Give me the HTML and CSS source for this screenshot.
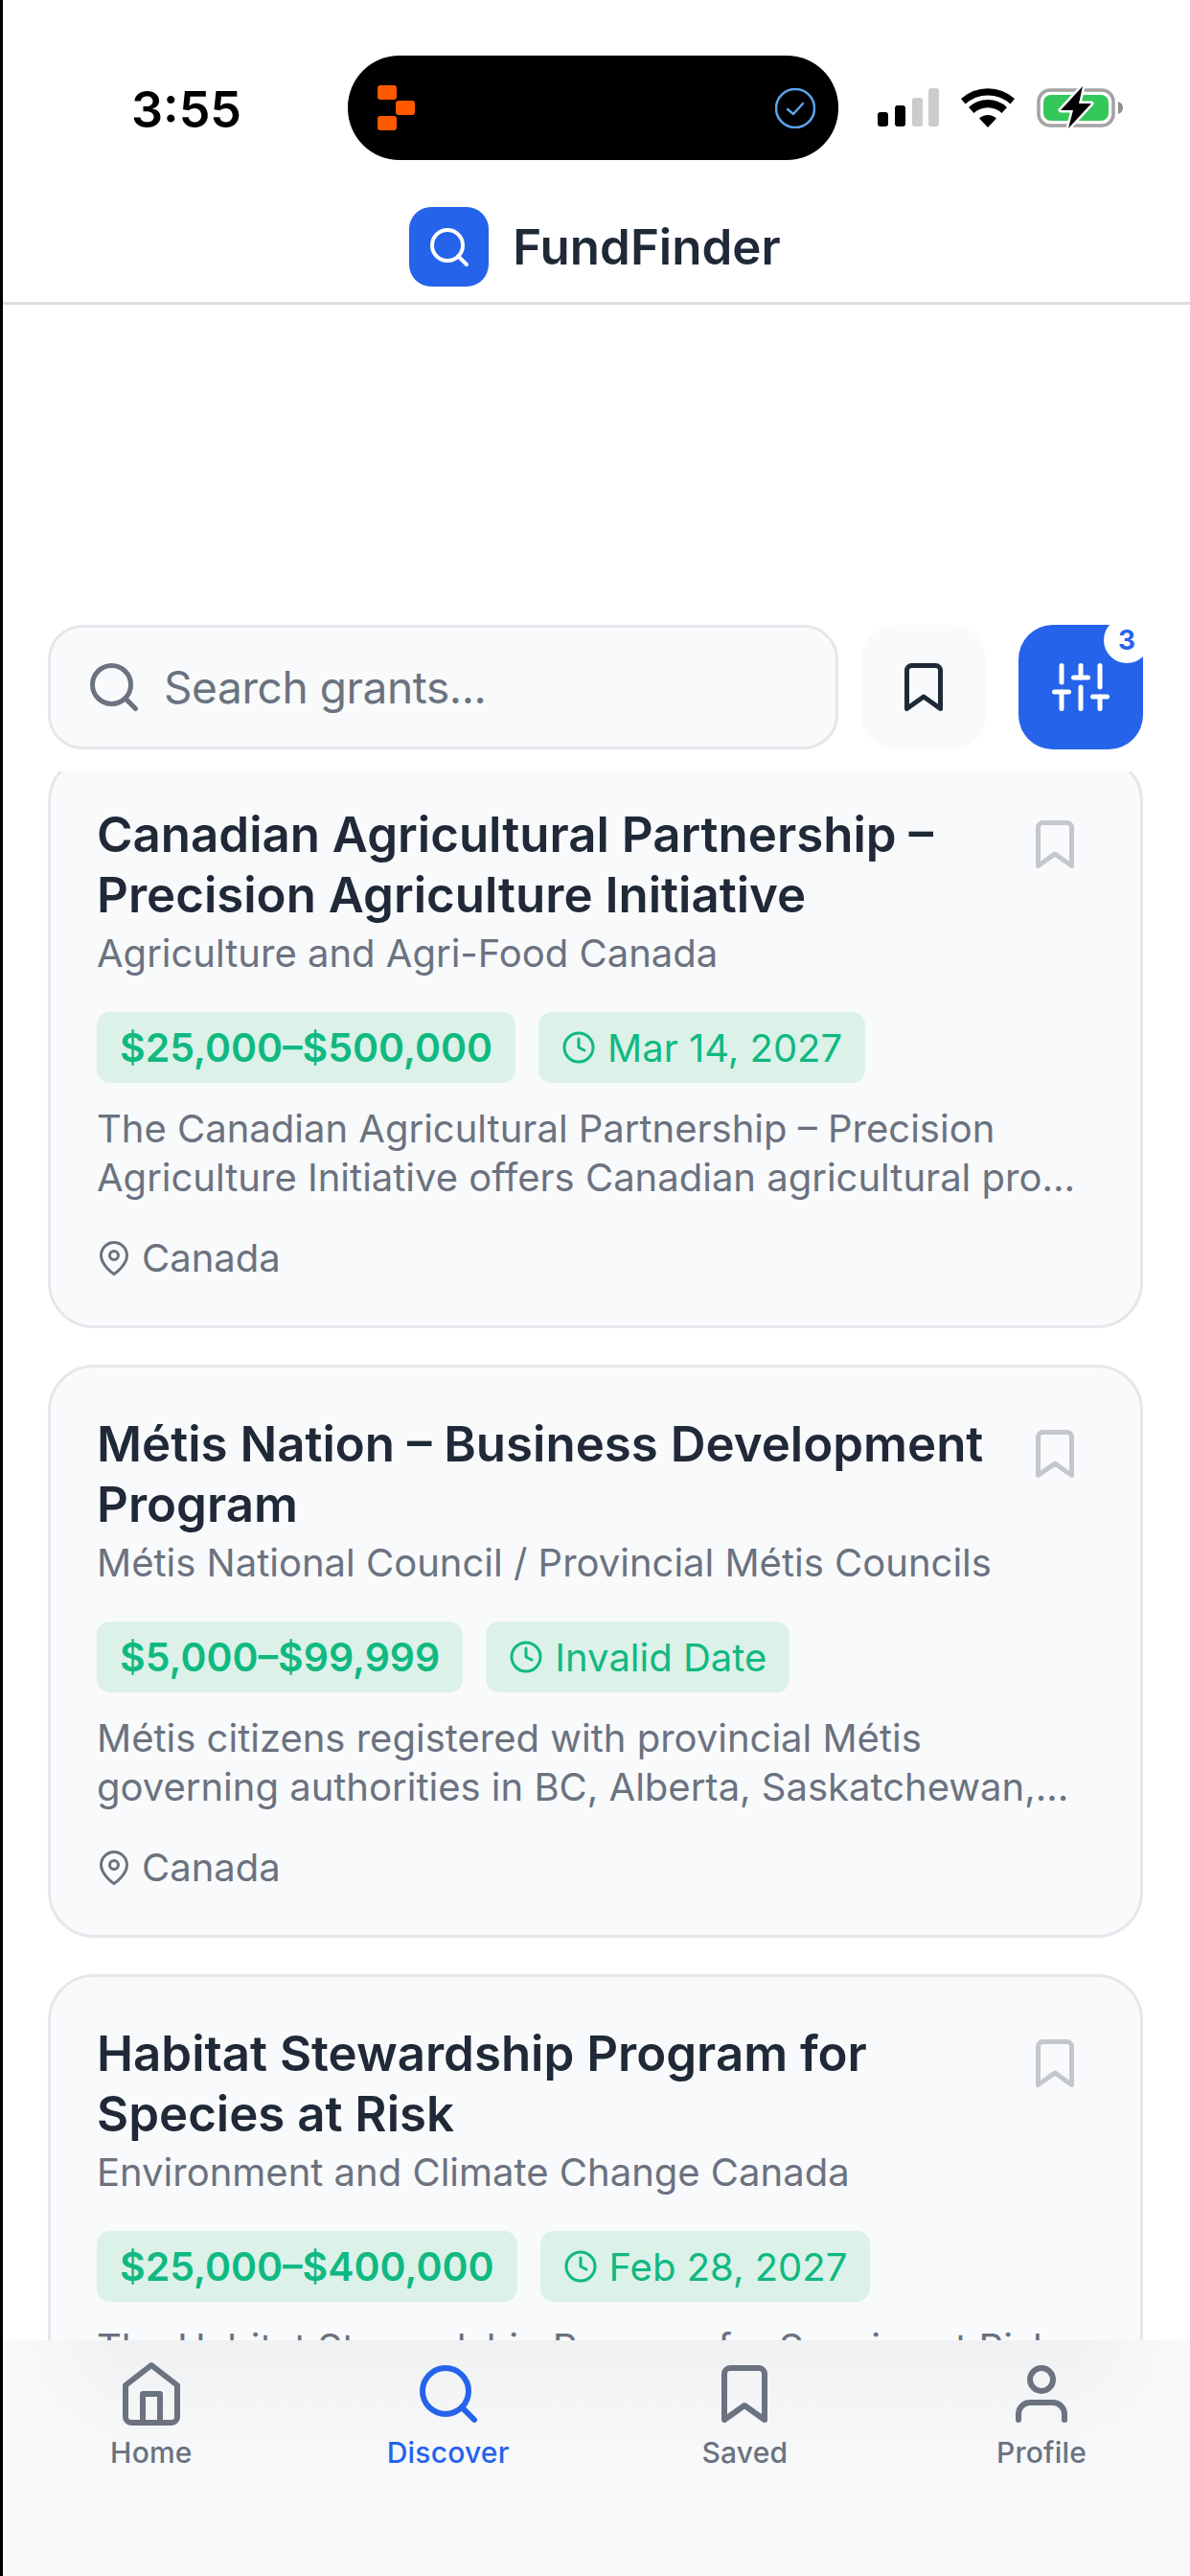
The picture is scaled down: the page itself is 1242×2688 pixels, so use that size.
FILE: index.html
```html
<!DOCTYPE html>
<html lang="en">

<head>
    <meta charset="UTF-8">
    <meta name="viewport" content="width=device-width, initial-scale=1.0">
    <title>FundFinder</title>
    <link rel="stylesheet" href="styles.css">
</head>

<body>
    <svg class="sprites" width="0" height="0">
        <symbol id="i-search" viewBox="0 0 24 24"><circle cx="11" cy="11" r="8" /><line x1="21" y1="21" x2="16.65" y2="16.65" /></symbol>
        <symbol id="i-bookmark" viewBox="0 0 24 24"><path d="M19 21l-7-5-7 5V5a2 2 0 0 1 2-2h10a2 2 0 0 1 2 2z" /></symbol>
        <symbol id="i-clock" viewBox="0 0 24 24"><circle cx="12" cy="12" r="10" /><polyline points="12 6 12 12 16 14" /></symbol>
        <symbol id="i-pin" viewBox="0 0 24 24"><path d="M21 10c0 7-9 13-9 13s-9-6-9-13a9 9 0 0 1 18 0z" /><circle cx="12" cy="10" r="3" /></symbol>
    </svg>

    <div class="status">
        <div class="time">3:55</div>
        <div class="island">
            <svg class="island-logo" viewBox="0 0 39 47" width="39" height="47">
                <rect x="0" y="0" width="20" height="15" rx="3" />
                <rect x="19" y="16" width="20" height="15" rx="3" />
                <rect x="0" y="32" width="20" height="15" rx="3" />
            </svg>
            <svg class="island-check" viewBox="0 0 42 42" width="42" height="42">
                <circle cx="21" cy="21" r="20" />
                <polyline points="13 22 19 27 29 16" />
            </svg>
        </div>
        <div class="status-icons">
            <svg class="signal" viewBox="0 0 64 40" width="64" height="40">
                <rect x="0" y="25" width="11" height="15" rx="3" fill="#000" />
                <rect x="18" y="18" width="11" height="22" rx="3" fill="#000" />
                <rect x="36" y="10" width="11" height="30" rx="3" fill="#ccc" />
                <rect x="53" y="0" width="11" height="40" rx="3" fill="#ccc" />
            </svg>
            <svg class="wifi" viewBox="0 0 56 41" width="56" height="41">
                <path d="M28 41l-9-9.500a13 13 0 0 1 18 0z" />
                <path d="M13.500 26l-5.500-6a29 29 0 0 1 40 0l-5.500 6a21 21 0 0 0-29 0z" />
                <path d="M4.500 16.500l-4.500-5.500a42 42 0 0 1 56 0l-4.500 5.500a35 35 0 0 0-47 0z" />
            </svg>
            <svg class="battery" viewBox="0 0 91 44" width="91" height="44">
                <rect x="2" y="4" width="78" height="37" rx="12" fill="none" stroke="#a3a3a3" stroke-width="3.500" />
                <path d="M85 16c3 1 5 3 5 6.500s-2 5.500-5 6.500z" fill="#8e8e8e" />
                <rect x="7" y="9" width="68" height="27" rx="8" fill="#34c759" />
                <path d="M48 0L25 25h13l-5 19 24-26H44z" fill="#000" stroke="#fff" stroke-width="5" paint-order="stroke" stroke-linejoin="round" />
            </svg>
        </div>
    </div>

    <header class="topbar">
        <div class="logo">
            <svg class="icon" width="48" height="48"><use href="#i-search" /></svg>
        </div>
        <div class="brand">FundFinder</div>
    </header>

    <div class="toolbar">
        <div class="searchbox">
            <svg class="icon" width="60" height="60"><use href="#i-search" /></svg>
            <span>Search grants...</span>
        </div>
        <button class="tool saved">
            <svg class="icon" width="60" height="60"><use href="#i-bookmark" /></svg>
        </button>
        <button class="tool filter">
            <svg class="icon" width="60" height="60" viewBox="0 0 24 24">
                <line x1="4" y1="21" x2="4" y2="14" />
                <line x1="4" y1="10" x2="4" y2="3" />
                <line x1="12" y1="21" x2="12" y2="12" />
                <line x1="12" y1="8" x2="12" y2="3" />
                <line x1="20" y1="21" x2="20" y2="16" />
                <line x1="20" y1="12" x2="20" y2="3" />
                <line x1="1" y1="14" x2="7" y2="14" />
                <line x1="9" y1="8" x2="15" y2="8" />
                <line x1="17" y1="16" x2="23" y2="16" />
            </svg>
            <span class="badge">3</span>
        </button>
    </div>

    <main class="list">
        <article class="card first">
            <div class="card-head">
                <h2>Canadian Agricultural Partnership – Precision Agriculture Initiative</h2>
                <svg class="icon mark" width="60" height="60"><use href="#i-bookmark" /></svg>
            </div>
            <div class="agency">Agriculture and Agri-Food Canada</div>
            <div class="tags">
                <span class="tag amount">$25,000–$500,000</span>
                <span class="tag"><svg class="icon" width="36" height="36"><use href="#i-clock" /></svg>Mar 14, 2027</span>
            </div>
            <p class="desc">The Canadian Agricultural Partnership – Precision Agriculture Initiative offers Canadian agricultural pro...</p>
            <div class="place"><svg class="icon" width="36" height="36"><use href="#i-pin" /></svg>Canada</div>
        </article>

        <article class="card">
            <div class="card-head">
                <h2>Métis Nation – Business Development Program</h2>
                <svg class="icon mark" width="60" height="60"><use href="#i-bookmark" /></svg>
            </div>
            <div class="agency">Métis National Council / Provincial Métis Councils</div>
            <div class="tags">
                <span class="tag amount">$5,000–$99,999</span>
                <span class="tag"><svg class="icon" width="36" height="36"><use href="#i-clock" /></svg>Invalid Date</span>
            </div>
            <p class="desc">Métis citizens registered with provincial Métis governing authorities in BC, Alberta, Saskatchewan,...</p>
            <div class="place"><svg class="icon" width="36" height="36"><use href="#i-pin" /></svg>Canada</div>
        </article>

        <article class="card">
            <div class="card-head">
                <h2>Habitat Stewardship Program for Species at Risk</h2>
                <svg class="icon mark" width="60" height="60"><use href="#i-bookmark" /></svg>
            </div>
            <div class="agency">Environment and Climate Change Canada</div>
            <div class="tags">
                <span class="tag amount">$25,000–$400,000</span>
                <span class="tag"><svg class="icon" width="36" height="36"><use href="#i-clock" /></svg>Feb 28, 2027</span>
            </div>
            <p class="desc">The Habitat Stewardship Program for Species at Risk</p>
        </article>
    </main>

    <nav class="tabs">
        <div class="tab">
            <svg class="icon" width="72" height="72" viewBox="0 0 24 24">
                <path d="M3 9l9-7 9 7v11a2 2 0 0 1-2 2H5a2 2 0 0 1-2-2z" />
                <polyline points="9 22 9 12 15 12 15 22" />
            </svg>
            Home
        </div>
        <div class="tab active">
            <svg class="icon" width="72" height="72"><use href="#i-search" /></svg>
            Discover
        </div>
        <div class="tab">
            <svg class="icon" width="72" height="72"><use href="#i-bookmark" /></svg>
            Saved
        </div>
        <div class="tab">
            <svg class="icon" width="72" height="72" viewBox="0 0 24 24">
                <path d="M20 21v-2a4 4 0 0 0-4-4H8a4 4 0 0 0-4 4v2" />
                <circle cx="12" cy="7" r="4" />
            </svg>
            Profile
        </div>
    </nav>
</body>

</html>
```

FILE: styles.css
```css
* {
    box-sizing: border-box;
}

body {
    margin: 0;
    height: 2688px;
    overflow: hidden;
    display: flex;
    flex-direction: column;
    border-left: 3px solid #000;
    background-color: #fff;
    font-family: Inter, "Noto Sans", sans-serif;
    color: #1f2937;
}

.sprites {
    position: absolute;
}

.icon {
    display: block;
    flex-shrink: 0;
    fill: none;
    stroke: currentColor;
    stroke-width: 2;
    stroke-linecap: round;
    stroke-linejoin: round;
}

/* status bar */
.status {
    height: 200px;
    flex-shrink: 0;
    display: flex;
    align-items: flex-start;
    padding-top: 58px;
}

.time {
    width: 360px;
    padding: 27px 0 0 134px;
    font-size: 52px;
    line-height: 60px;
    font-weight: 600;
    color: #000;
}

.island {
    width: 512px;
    height: 109px;
    border-radius: 54px;
    background-color: #000;
    display: flex;
    align-items: center;
    justify-content: space-between;
    padding: 0 24px 0 31px;
}

.island-logo {
    fill: #ff5a00;
}

.island-check {
    fill: none;
    stroke: #5aa5ec;
    stroke-width: 2.500;
    stroke-linecap: round;
    stroke-linejoin: round;
}

.status-icons {
    display: flex;
    align-items: flex-start;
    padding: 34px 0 0 41px;
    gap: 23px;
}

.battery {
    margin-top: -2px;
}

/* top bar */
.topbar {
    height: 118px;
    flex-shrink: 0;
    display: flex;
    justify-content: center;
    align-items: flex-start;
    gap: 25px;
    padding: 16px 3px 0 0;
    border-bottom: 3px solid #dedede;
}

.logo {
    width: 83px;
    height: 83px;
    border-radius: 23px;
    background-color: #2563eb;
    color: #fff;
    display: flex;
    align-items: center;
    justify-content: center;
}

.brand {
    font-size: 51px;
    line-height: 83px;
    font-weight: 600;
}

/* search row */
.toolbar {
    flex-shrink: 0;
    display: flex;
    margin: 334px 49px 0 47px;
}

.searchbox {
    width: 825px;
    height: 130px;
    display: flex;
    align-items: center;
    gap: 22px;
    padding-left: 36px;
    border: 3px solid #e5e7eb;
    border-radius: 36px;
    background-color: #f9fafb;
    color: #6b7280;
    font-size: 46px;
    letter-spacing: -.4px;
}

.tool {
    position: relative;
    width: 130px;
    height: 130px;
    padding: 0;
    border: none;
    border-radius: 36px;
    background-color: #f9fafb;
    color: #1f2937;
    display: flex;
    align-items: center;
    justify-content: center;
}

.saved {
    margin-left: 24px;
}

.filter {
    margin-left: 34px;
    background-color: #2563eb;
    color: #fff;
}

.badge {
    position: absolute;
    top: -8px;
    right: -7px;
    width: 48px;
    height: 48px;
    border-radius: 50%;
    background-color: #fff;
    color: #2563eb;
    font-family: Inter, sans-serif;
    font-size: 28px;
    font-weight: 700;
    line-height: 48px;
    text-align: center;
}

/* grants */
.list {
    flex: 1;
    min-height: 0;
    overflow: hidden;
    margin-top: 23px;
    padding: 0 49px 0 47px;
    display: flex;
    flex-direction: column;
    gap: 38px;
}

.card {
    flex-shrink: 0;
    height: 598px;
    padding: 48px;
    border: 3px solid #e5e7eb;
    border-radius: 48px;
    background-color: #f9fafb;
}

.card.first {
    margin-top: -17px;
}

.card-head {
    display: flex;
    justify-content: space-between;
    align-items: flex-start;
}

.card-head h2 {
    margin: 0;
    width: 950px;
    font-size: 51px;
    line-height: 63px;
    font-weight: 600;
}

.mark {
    color: #c4c7cc;
    margin: 12px 11px 0 0;
}

.agency {
    font-size: 40px;
    line-height: 60px;
    color: #6b7280;
}

.tags {
    display: flex;
    gap: 24px;
    margin-top: 31px;
}

.tag {
    height: 74px;
    display: flex;
    align-items: center;
    gap: 12px;
    padding: 0 24px;
    border-radius: 14px;
    background-color: #dcf2e9;
    color: #10b981;
    font-size: 40px;
}

.tag.amount {
    font-size: 41px;
    font-weight: 600;
}

.desc {
    margin: 22px 0 0;
    font-size: 40px;
    line-height: 51px;
    color: #6b7280;
}

.place {
    display: flex;
    align-items: center;
    gap: 11px;
    margin-top: 35px;
    font-size: 40px;
    line-height: 48px;
    color: #6b7280;
}

/* bottom tabs */
.tabs {
    height: 246px;
    flex-shrink: 0;
    display: grid;
    grid-template-columns: repeat(4, 1fr);
    padding-top: 20px;
    background: linear-gradient(90deg, #f9fafb 0%, #f9fafb00 10%, #f9fafb00 90%, #f9fafb 100%), linear-gradient(180deg, #eff1f3 0%, #f8f9fb 50%);
}

.tab {
    display: flex;
    flex-direction: column;
    align-items: center;
    font-size: 30px;
    line-height: 50px;
    font-weight: 500;
    letter-spacing: .2px;
    color: #6b7280;
}

.tab.active {
    color: #2563eb;
}
```
